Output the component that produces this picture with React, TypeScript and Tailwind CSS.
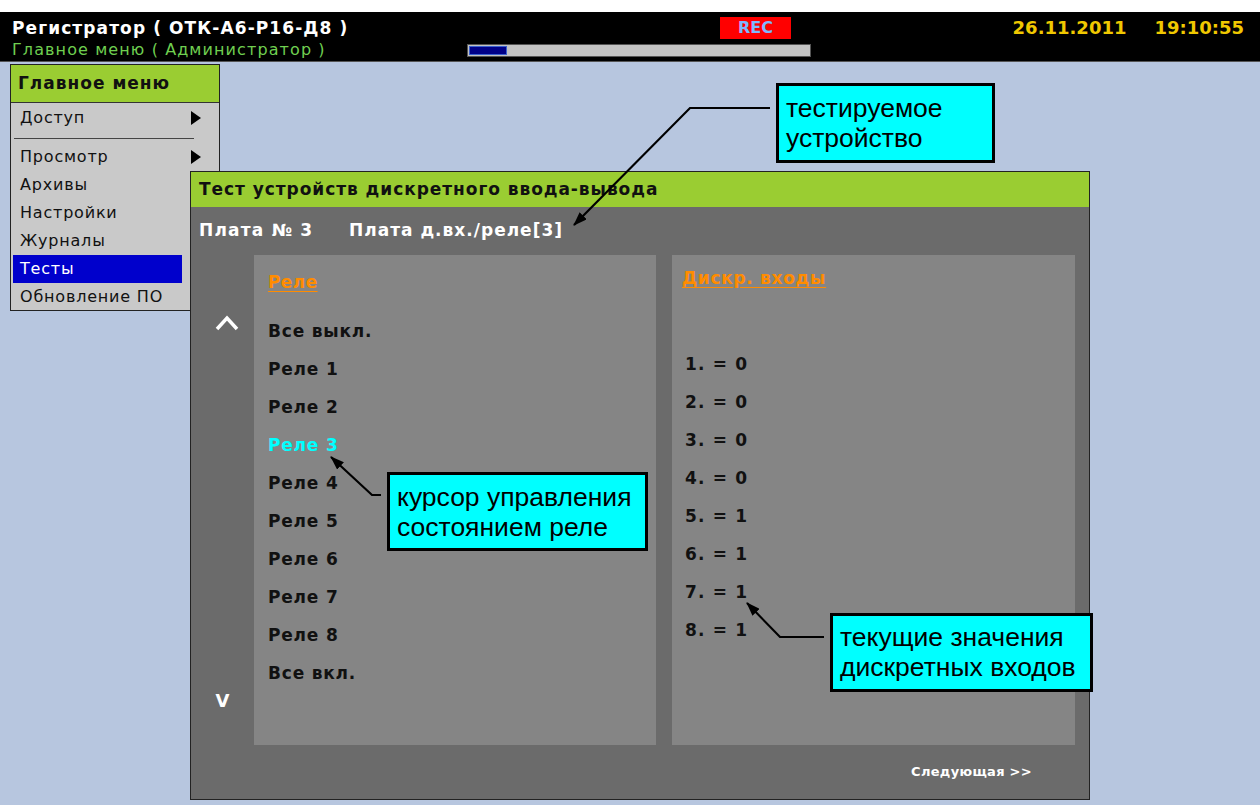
import React from "react";

const dv = "font-['DejaVu_Sans',sans-serif]";
const ar = "font-['Liberation_Sans',Arial,sans-serif]";

function Tri() {
  return (
    <svg width="10" height="14" viewBox="0 0 10 14" className="block">
      <polygon points="0,0 10,7 0,14" fill="#000" />
    </svg>
  );
}

function MainMenu() {
  const items = ["Архивы", "Настройки", "Журналы"];
  return (
    <div className={`absolute left-[10px] top-[2px] w-[210px] h-[247px] bg-[#c9c9c9] border border-[#222] ${dv}`}>
      <div className="h-[38px] bg-[#9acd32] border-b border-[#333] flex items-center pl-[7px] text-[17px] font-bold text-[#111] tracking-[1px]">
        Главное меню
      </div>
      <div className="h-[30px] flex items-center justify-between pl-[9px] pr-[18px] text-[16px] text-[#111] tracking-[0.8px]">
        <span>Доступ</span>
        <Tri />
      </div>
      <div className="mx-[3px] w-[180px] h-[1px] bg-[#444] mt-[5px] mb-[3px]" />
      <div className="h-[29px] flex items-center justify-between pl-[9px] pr-[18px] text-[16px] text-[#111] tracking-[0.8px]">
        <span>Просмотр</span>
        <Tri />
      </div>
      {items.map((t) => (
        <div key={t} className="h-[28px] flex items-center pl-[9px] text-[16px] text-[#111] tracking-[0.8px]">
          {t}
        </div>
      ))}
      <div className="h-[28px] ml-[2px] w-[169px] bg-[#0000cc] flex items-center pl-[7px] text-[16px] text-white tracking-[0.8px]">
        Тесты
      </div>
      <div className="h-[28px] flex items-center pl-[9px] text-[16px] text-[#111] tracking-[0.8px]">Обновление ПО</div>
    </div>
  );
}

function Dialog() {
  const relays = ["Все выкл.", "Реле 1", "Реле 2", "Реле 3", "Реле 4", "Реле 5", "Реле 6", "Реле 7", "Реле 8", "Все вкл."];
  const inputs = ["1. = 0", "2. = 0", "3. = 0", "4. = 0", "5. = 1", "6. = 1", "7. = 1", "8. = 1"];
  return (
    <div className={`absolute left-[190px] top-[109px] w-[900px] h-[629px] bg-[#6b6b6b] border border-[#222] flex flex-col ${dv}`}>
      <div className="h-[35px] shrink-0 bg-[#9acd32] flex items-center pl-[8px] text-[17px] font-bold text-[#111] tracking-[0.95px]">
        Тест устройств дискретного ввода-вывода
      </div>
      <div className="h-[48px] shrink-0 flex items-center pl-[8px] text-[17px] font-bold text-white tracking-[1.2px]">
        <span className="w-[150px]">Плата № 3</span>
        <span className="tracking-[1px]">Плата д.вх./реле[3]</span>
      </div>
      <div className="h-[490px] shrink-0 flex">
        <div className="w-[63px] flex flex-col items-center">
          <div className="mt-[60px] ml-[8px]">
            <svg width="24" height="16" viewBox="0 0 24 16" className="block">
              <polyline points="2,14 12,3 22,14" fill="none" stroke="#fff" strokeWidth="3.5" strokeLinejoin="miter" />
            </svg>
          </div>
          <div className="mt-auto mb-[31px] text-[18px] font-bold text-white">V</div>
        </div>
        <div className="w-[402px] bg-[#858585] pl-[14px]">
          <div className="pt-[16px] leading-[22px] text-[17px] font-bold text-[#ff8c00] underline underline-offset-[3px] tracking-[0.4px]">
            Реле
          </div>
          <div className="mt-[20px]">
            {relays.map((r) => (
              <div
                key={r}
                className={`h-[38px] flex items-center text-[17px] font-bold tracking-[0.8px] ${r === "Реле 3" ? "text-[#00ffff]" : "text-[#111]"}`}
              >
                {r}
              </div>
            ))}
          </div>
        </div>
        <div className="w-[16px]" />
        <div className="w-[403px] bg-[#858585] pl-[10px]">
          <div className="pt-[12px] leading-[22px] text-[17px] font-bold text-[#ff8c00] underline underline-offset-[3px] tracking-[0.7px]">
            Дискр. входы
          </div>
          <div className="mt-[57px] pl-[3px]">
            {inputs.map((r) => (
              <div key={r} className="h-[38px] flex items-center text-[17px] font-bold text-[#111] tracking-[1.2px]">
                {r}
              </div>
            ))}
          </div>
        </div>
      </div>
      <div className="flex-1 flex items-center justify-end pr-[57px] text-[13px] font-bold text-white tracking-[0.3px]">
        Следующая &gt;&gt;
      </div>
    </div>
  );
}

function Callout({ className, lines }: { className: string; lines: string[] }) {
  return (
    <div className={`absolute bg-[#00ffff] border-[3px] border-black pl-[7px] ${ar} text-[26.5px] leading-[30px] text-black ${className}`}>
      {lines.map((l) => (
        <div key={l}>{l}</div>
      ))}
    </div>
  );
}

function Arrows() {
  return (
    <svg className="absolute left-0 top-0 pointer-events-none" width="1260" height="805" viewBox="0 0 1260 805">
      <defs>
        <marker id="ah" markerWidth="14" markerHeight="10" refX="13" refY="5" orient="auto" markerUnits="userSpaceOnUse">
          <polygon points="0,0 14,5 0,10" fill="#000" />
        </marker>
      </defs>
      <polyline points="770,108 690,108 574,225" fill="none" stroke="#000" strokeWidth="2.2" markerEnd="url(#ah)" />
      <polyline points="381,495 372,495 331,457" fill="none" stroke="#000" strokeWidth="2.2" markerEnd="url(#ah)" />
      <polyline points="824,637 780,637 747,603" fill="none" stroke="#000" strokeWidth="2.2" markerEnd="url(#ah)" />
    </svg>
  );
}

export default function App() {
  return (
    <div className="relative w-[1260px] h-[805px] overflow-hidden bg-[#b7c6df]">
      <div className="h-[12px] bg-white" />
      <div className={`h-[50px] bg-black border-b border-[#555] ${dv}`}>
        <div className="h-[27px] flex items-end pl-[12px]">
          <div className="w-[708px] text-[17px] font-bold text-white leading-[22px] tracking-[1.1px]">Регистратор ( ОТК-А6-Р16-Д8 )</div>
          <div className="w-[71px] h-[22px] bg-[#ff0000] flex items-center justify-center text-[16px] font-bold text-[#7fb8ff]">
            REC
          </div>
          <div className="ml-auto flex pr-[16px] text-[18px] font-bold text-[#f0c800] leading-[22px]">
            <span>26.11.2011</span>
            <span className="ml-[28px]">19:10:55</span>
          </div>
        </div>
        <div className="h-[22px] flex items-center pl-[12px]">
          <div className="w-[455px] text-[16px] text-[#6fcf50] leading-[20px] tracking-[1.1px]">Главное меню ( Администратор )</div>
          <div className="w-[344px] h-[13px] bg-[#c3c3c3] border border-[#555] p-[1px]">
            <div className="w-[38px] h-full bg-[#000088] border border-[#3a5fd0]" />
          </div>
        </div>
      </div>
      <div className="relative h-[743px]">
        <MainMenu />
        <Dialog />
      </div>
      <Callout className="left-[776px] top-[83px] w-[219px] h-[80px] pt-[7px]" lines={["тестируемое", "устройство"]} />
      <Callout className="left-[387px] top-[472px] w-[261px] h-[79px] pt-[7px]" lines={["курсор управления", "состоянием реле"]} />
      <Callout className="left-[830px] top-[613px] w-[263px] h-[79px] pt-[6px]" lines={["текущие значения", "дискретных входов"]} />
      <Arrows />
    </div>
  );
}
